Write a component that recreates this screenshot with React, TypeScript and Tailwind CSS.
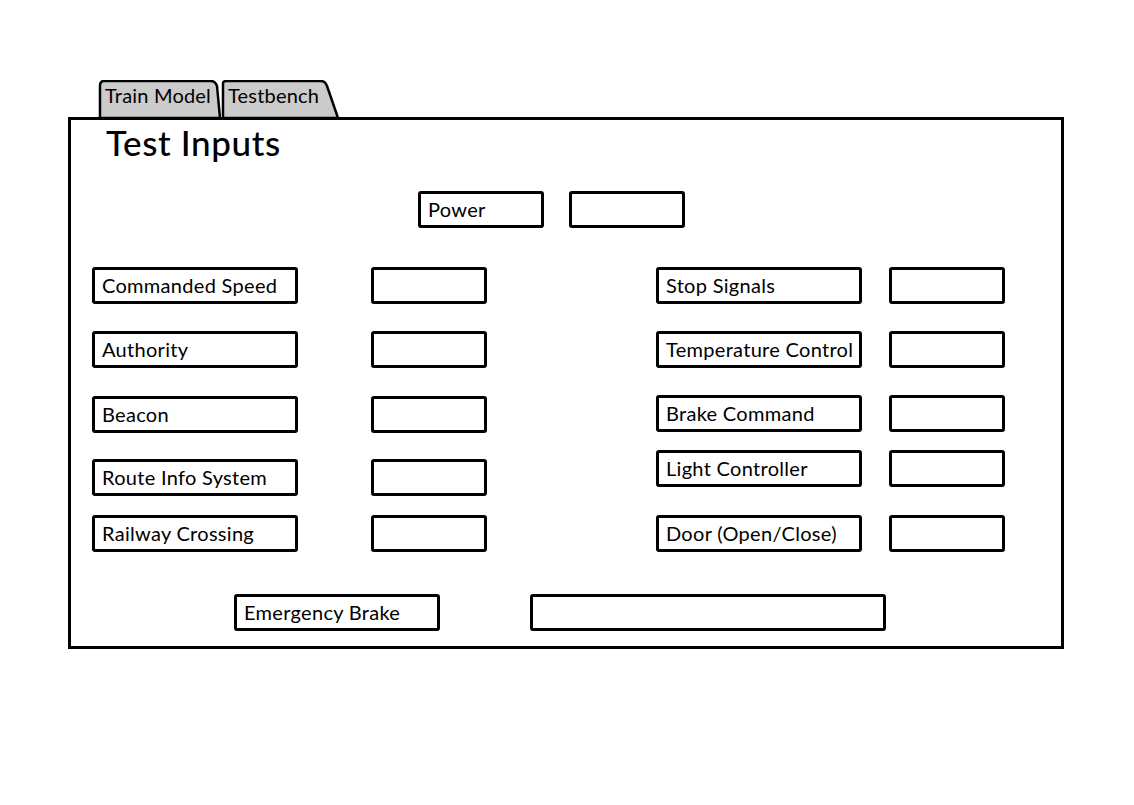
const Field = ({ label, className = "" }: { label?: string; className?: string }) => (
  <div className={`h-[37px] border-[3px] border-black rounded-[3px] bg-white flex items-center pl-[7px] pb-[2px] text-[20px] tracking-[0.3px] leading-none ${className}`}>
    {label}
  </div>
);

const Tab = ({ label, w, slant, left }: { label: string; w: number; slant: number; left?: boolean }) => (
  <div className="relative h-[38px] flex items-start" style={{ width: w }}>
    <svg className="absolute inset-0" width={w} height={38} viewBox={`0 0 ${w} 38`}>
      <path
        d={`M2 38 L2 ${left ? 6 : 3} Q2 1 6 1 L${w - slant - 4} 1 Q${w - slant} 1 ${w - slant + 2} 6 L${w - 1} 38 Z`}
        fill="#cbcbcb"
        stroke="black"
        strokeWidth="2.5"
      />
    </svg>
    <span className="relative pl-[7px] pt-[5px] text-[20px] tracking-[0.2px] leading-none">{label}</span>
  </div>
);

const leftRows = [
  { label: "Commanded Speed", mt: "mt-0" },
  { label: "Authority", mt: "mt-[27px]" },
  { label: "Beacon", mt: "mt-[28px]" },
  { label: "Route Info System", mt: "mt-[26px]" },
  { label: "Railway Crossing", mt: "mt-[19px]" },
];

const rightRows = [
  { label: "Stop Signals", mt: "mt-0" },
  { label: "Temperature Control", mt: "mt-[27px]" },
  { label: "Brake Command", mt: "mt-[27px]" },
  { label: "Light Controller", mt: "mt-[18px]" },
  { label: "Door (Open/Close)", mt: "mt-[28px]" },
];

export default function App() {
  return (
    <div className="w-[1134px] h-[805px] bg-white text-black pt-[80px] pl-[68px]" style={{ fontFamily: "Lato, 'Open Sans', sans-serif" }}>
      <div className="flex ml-[30px]">
        <Tab label="Train Model" w={123} slant={6} left />
        <Tab label="Testbench" w={118} slant={14} />
      </div>
      <div className="w-[996px] h-[532px] border-[3px] border-black -mt-[1px] bg-white">
        <div className="ml-[35px] mt-[2px] text-[35px] tracking-[0.6px] leading-[40px] font-medium">Test Inputs</div>
        <div className="flex gap-[25px] ml-[347px] mt-[29px]">
          <Field label="Power" className="w-[126px]" />
          <Field className="w-[116px]" />
        </div>
        <div className="flex mt-[39px]">
          <div className="ml-[21px] flex flex-col">
            {leftRows.map((r) => (
              <div key={r.label} className={`flex gap-[73px] ${r.mt}`}>
                <Field label={r.label} className="w-[206px]" />
                <Field className="w-[116px]" />
              </div>
            ))}
          </div>
          <div className="ml-[169px] flex flex-col">
            {rightRows.map((r) => (
              <div key={r.label} className={`flex gap-[27px] ${r.mt}`}>
                <Field label={r.label} className="w-[206px]" />
                <Field className="w-[116px]" />
              </div>
            ))}
          </div>
        </div>
        <div className="flex gap-[90px] ml-[163px] mt-[42px]">
          <Field label="Emergency Brake" className="w-[206px]" />
          <Field className="w-[356px]" />
        </div>
      </div>
    </div>
  );
}
